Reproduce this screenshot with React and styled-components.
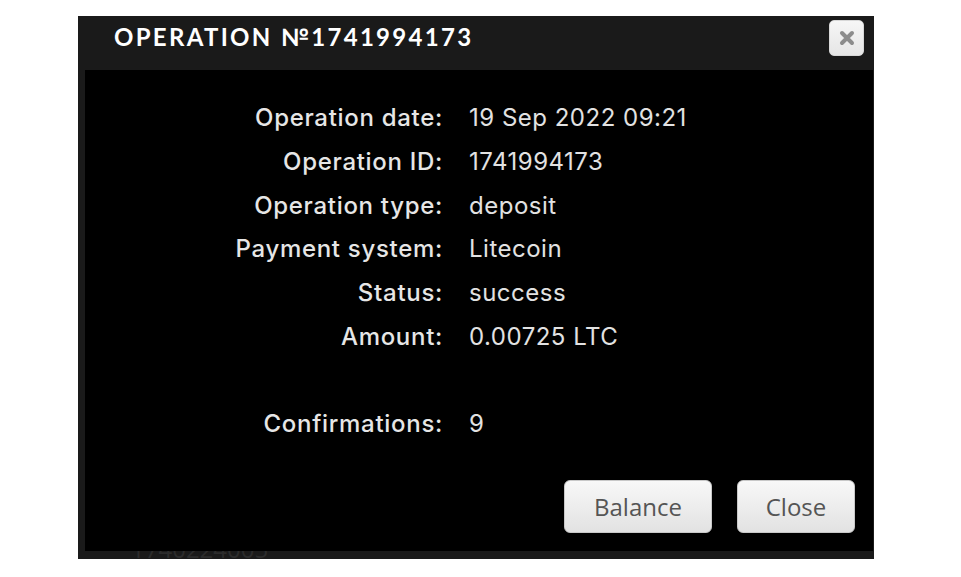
import React from "react";
import styled, { createGlobalStyle } from "styled-components";

const GlobalStyle = createGlobalStyle`
  html, body {
    margin: 0;
    padding: 0;
    background: #ffffff;
  }
  body {
    font-family: "Inter", "Liberation Sans", sans-serif;
  }
`;

const rows = [
  { label: "Operation date:", value: "19 Sep 2022 09:21" },
  { label: "Operation ID:", value: "1741994173" },
  { label: "Operation type:", value: "deposit" },
  { label: "Payment system:", value: "Litecoin" },
  { label: "Status:", value: "success" },
  { label: "Amount:", value: "0.00725 LTC" },
  { label: "", value: "" },
  { label: "Confirmations:", value: "9" },
];

const Page = styled.div`
  padding: 16px 0 0 78px;
  height: 577px;
  box-sizing: border-box;
  overflow: hidden;
`;

const Dialog = styled.div`
  width: 796px;
  background: #1a1a1a;
  display: flex;
  flex-direction: column;
`;

const TitleBar = styled.div`
  height: 54px;
  box-sizing: border-box;
  display: flex;
  align-items: flex-start;
  justify-content: space-between;
  padding: 4px 10px 0 36px;
`;

const Title = styled.div`
  font-family: "Lato", "Liberation Sans", sans-serif;
  font-weight: 700;
  font-size: 24px;
  line-height: 34px;
  letter-spacing: 2.3px;
  color: #ffffff;
`;

const CloseIcon = styled.button`
  width: 35px;
  height: 36px;
  border: 1px solid #d8d8d8;
  border-radius: 5px;
  background: linear-gradient(#f6f6f6, #e6e6e6);
  display: flex;
  align-items: center;
  justify-content: center;
  padding: 0;
`;

const Body = styled.div`
  margin: 0 1px 0 7px;
  background: #000000;
  padding: 26px 18px 18px 0;
  display: flex;
  flex-direction: column;
`;

const Grid = styled.div`
  display: grid;
  grid-template-columns: 358px 1fr;
  column-gap: 26px;
  grid-auto-rows: 43.7px;
  align-items: center;
`;

const Label = styled.div`
  text-align: right;
  font-size: 24px;
  font-weight: 500;
  letter-spacing: 0.7px;
  color: #e6e6e6;
`;

const Value = styled.div`
  font-size: 24px;
  font-weight: 400;
  letter-spacing: 0.5px;
  color: #e2e2e2;
`;

const Footer = styled.div`
  display: flex;
  justify-content: flex-end;
  gap: 25px;
  margin-top: 34px;
`;

const Button = styled.button`
  height: 53px;
  width: ${(p) => p.$w}px;
  border: 1px solid #c8c8c8;
  border-radius: 6px;
  background: linear-gradient(#f8f8f8 0%, #ededed 50%, #e2e2e2 100%);
  font-family: "Open Sans", "Liberation Sans", sans-serif;
  font-size: 24px;
  color: #555555;
  padding: 0;
`;

const Shadow = styled.div`
  height: 8px;
  overflow: hidden;
  padding-left: 53px;
  font-family: "Open Sans", "Liberation Sans", sans-serif;
  font-size: 24px;
  line-height: 24px;
  color: #2c2c2c;
  display: flex;
  align-items: flex-start;
`;

const ShadowText = styled.span`
  margin-top: -14px;
`;

const XGlyph = () => (
  <svg width="16" height="16" viewBox="0 0 16 16">
    <path
      d="M3 3 L13 13 M13 3 L3 13"
      stroke="#8c8c8c"
      strokeWidth="4"
      strokeLinecap="round"
      fill="none"
    />
  </svg>
);

export default function App() {
  return (
    <Page>
      <GlobalStyle />
      <Dialog>
        <TitleBar>
          <Title>OPERATION №1741994173</Title>
          <CloseIcon aria-label="close">
            <XGlyph />
          </CloseIcon>
        </TitleBar>
        <Body>
          <Grid>
            {rows.map((r, i) => (
              <React.Fragment key={i}>
                <Label>{r.label}</Label>
                <Value>{r.value}</Value>
              </React.Fragment>
            ))}
          </Grid>
          <Footer>
            <Button $w={148}>Balance</Button>
            <Button $w={118}>Close</Button>
          </Footer>
        </Body>
        <Shadow>
          <ShadowText>1740224005</ShadowText>
        </Shadow>
      </Dialog>
    </Page>
  );
}
